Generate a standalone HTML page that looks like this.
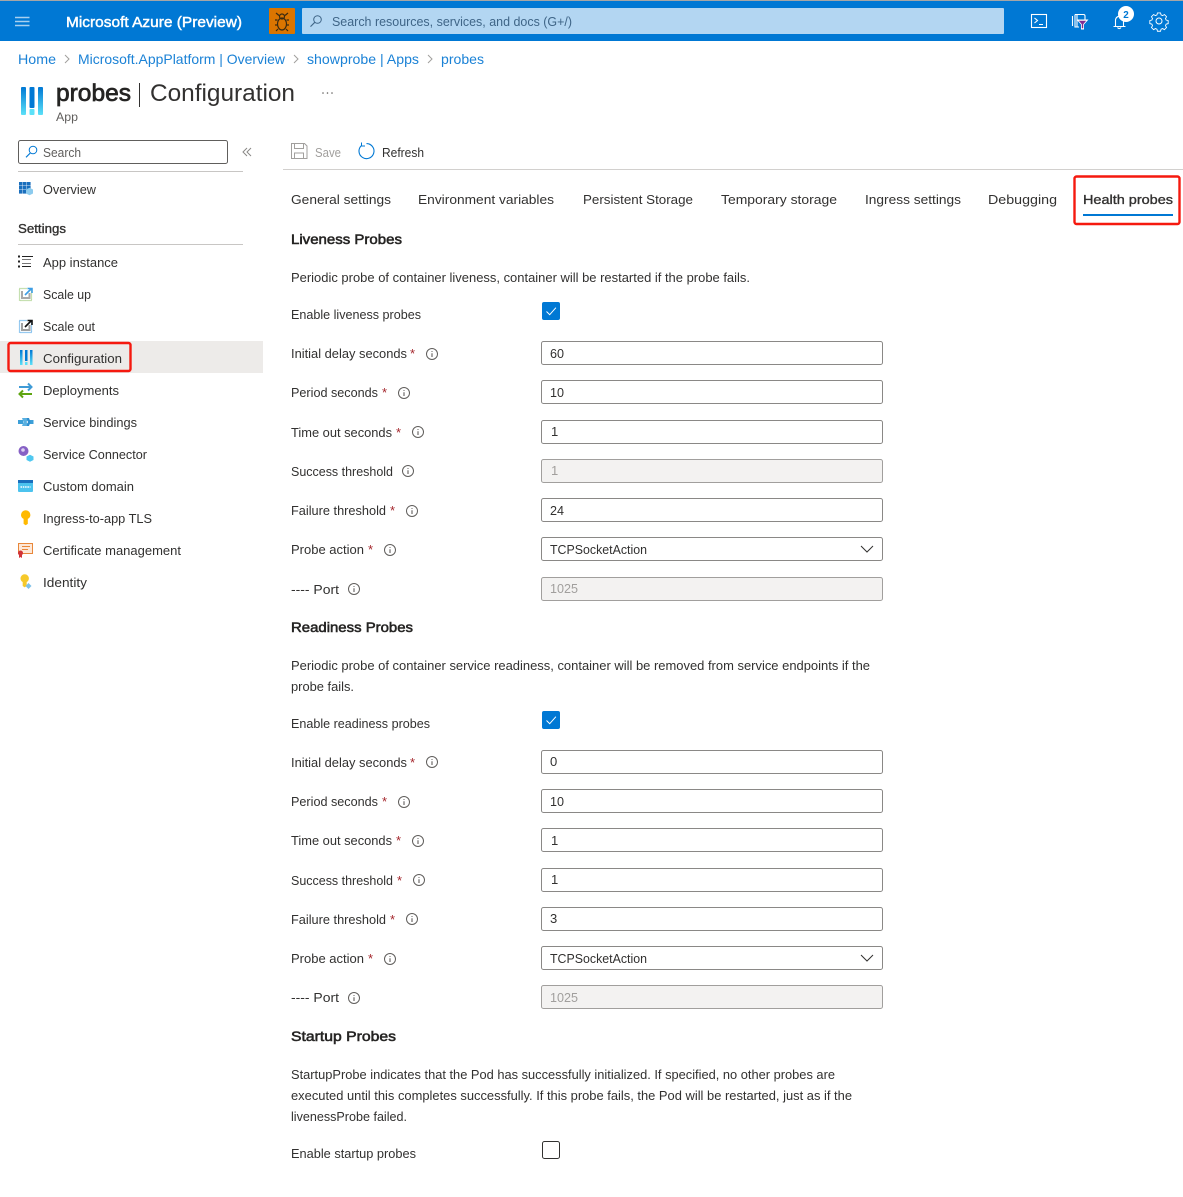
<!DOCTYPE html>
<html lang="en">
<head>
<meta charset="utf-8">
<title>probes | Configuration</title>
<style>
html,body{margin:0;padding:0;background:#fff;width:1183px;height:1197px;overflow:hidden}
svg{display:block}
text{font-family:"Liberation Sans",sans-serif;font-size:13px;fill:#323130}
.sb{stroke:#323130;stroke-width:.35}
.b{font-size:14px;stroke:#252423;stroke-width:.55;fill:#252423}
.l{fill:#1b82d6;font-size:14px}
.r{fill:#a4262c;font-size:13px}
.d{fill:#a19f9d}
.ib{fill:#fff;stroke:#8a8886;stroke-width:1}
.id{fill:#f3f2f1;stroke:#a19f9d;stroke-width:1}
.i{fill:none;stroke:#605e5c;stroke-width:1}
.w{fill:none;stroke:#fff;stroke-width:1.1}
</style>
</head>
<body>
<svg width="1183" height="1197" viewBox="0 0 1183 1197" xmlns="http://www.w3.org/2000/svg">
<defs>
<linearGradient id="g" x1="0" y1="0" x2="0" y2="1"><stop offset="0" stop-color="#0078d4"/><stop offset="1" stop-color="#5ce1f8"/></linearGradient>
<g id="info"><circle cx="0" cy="0" r="5.5" class="i"/><path d="M0-.8V3M0-3V-2.1" stroke="#605e5c" stroke-width="1.1" fill="none"/></g>
<path id="chk" d="M4.500 9.500l3.200 3.200 6.200-7" fill="none" stroke="#fff" stroke-width="1"/>
</defs>

<!-- Top bar -->
<rect width="1183" height="41" fill="#0078d4"/>
<rect width="1183" height="1" fill="#a6a6a6"/>
<path d="M15 17.500h14.500M15 21.500h14.500M15 25.500h14.500" stroke="#a8d0ef" stroke-width="1.500" fill="none"/>
<text x="66" y="27" textLength="176" lengthAdjust="spacingAndGlyphs" style="font-size:15px;fill:#fff;stroke:#fff;stroke-width:.45">Microsoft Azure (Preview)</text>
<rect x="269" y="8" width="26" height="26" rx="1" fill="#db7500"/>
<g fill="none" stroke="#3b2a10" stroke-width="1.200"><ellipse cx="282" cy="24" rx="4.500" ry="6"/><circle cx="282" cy="16.500" r="2.500"/><path d="M276 13l3 2.500M288 13l-3 2.500M275 20h2.500M289 20h-2.500M275 25h2.500M289 25h-2.500M276 31l2-2M288 31l-2-2"/></g>
<rect x="302" y="8" width="702" height="26" rx="1" fill="#b3d6f2"/>
<circle cx="317.500" cy="19.500" r="3.800" fill="none" stroke="#3f6587" stroke-width="1"/><path d="M314.800 22.300l-4.300 4.300" stroke="#3f6587" stroke-width="1.100"/>
<text x="332" y="26" textLength="240" lengthAdjust="spacingAndGlyphs" style="fill:#3f6587">Search resources, services, and docs (G+/)</text>
<!-- right icons -->
<rect x="1031.500" y="14.500" width="15" height="13" class="w"/><path d="M1034.500 18l3 2.500-3 2.500M1039 24.500h4" class="w"/>
<path d="M1075 14.500h8.500a1.500 1.500 0 0 1 1.500 1.500V20M1075 14.500v12.500h4M1072.500 16v10M1077 14.500v12.500" class="w"/>
<path d="M1076.500 19.500h12l-4.500 5v5h-3v-5z" fill="#fff"/><path d="M1078.800 20.700h7.400l-3 3.500v4h-1.400v-4z" fill="#7c2b92"/>
<path d="M1115.500 26.500v-6a4.500 4.500 0 0 1 3-4.200M1123.500 20v6.500M1113.500 26.500h12M1117.500 27.500a2 2 0 0 0 3.500 0" class="w"/>
<circle cx="1126" cy="14" r="8" fill="#fff"/><text x="1123.300" y="18" textLength="5.500" lengthAdjust="spacingAndGlyphs" style="font-size:10px;fill:#0078d4;font-weight:bold">2</text>
<g class="w" style="stroke-width:1"><circle cx="1159" cy="21" r="3"/><path d="M1157.300 13h3.400l.6 2.300 1.700.7 2-1.200 2.400 2.400-1.200 2 .7 1.700 2.300.6v3.400l-2.300.6-.7 1.700 1.200 2-2.400 2.400-2-1.200-1.700.7-.6 2.300h-3.400l-.6-2.300-1.700-.7-2 1.200-2.400-2.400 1.200-2-.7-1.700-2.300-.6v-3.400l2.300-.6.7-1.700-1.200-2 2.400-2.400 2 1.200 1.700-.7z" transform="translate(1159 21) scale(.9) translate(-1159 -22)"/></g>

<!-- Breadcrumb -->
<text x="18" y="64" textLength="38" lengthAdjust="spacingAndGlyphs" class="l">Home</text>
<path d="M65 55l4 4-4 4M294 55l4 4-4 4M428 55l4 4-4 4" fill="none" stroke="#a19f9d"/>
<text x="78" y="64" textLength="207" lengthAdjust="spacingAndGlyphs" class="l">Microsoft.AppPlatform | Overview</text>
<text x="307" y="64" textLength="112" lengthAdjust="spacingAndGlyphs" class="l">showprobe | Apps</text>
<text x="441" y="64" textLength="43" lengthAdjust="spacingAndGlyphs" class="l">probes</text>

<!-- Title -->
<rect x="21" y="87" width="5" height="28" rx="1" fill="url(#g)"/>
<rect x="29.500" y="87" width="5" height="21" rx="1" fill="#0078d4"/><rect x="29.500" y="109" width="5" height="6" rx="1" fill="#5ce1f8"/>
<rect x="38" y="87" width="5" height="28" rx="1" fill="url(#g)"/>
<text x="56" y="101" textLength="75" lengthAdjust="spacingAndGlyphs" style="font-size:24px;fill:#252423;stroke:#252423;stroke-width:.7">probes</text>
<rect x="139" y="83" width="1" height="24" fill="#323130"/>
<text x="150" y="101" textLength="145" lengthAdjust="spacingAndGlyphs" style="font-size:24px;fill:#323130">Configuration</text>
<text x="56" y="121" textLength="22" lengthAdjust="spacingAndGlyphs" style="font-size:12px;fill:#605e5c">App</text>
<circle cx="323" cy="93" r=".8" fill="#605e5c"/><circle cx="327.500" cy="93" r=".8" fill="#605e5c"/><circle cx="332" cy="93" r=".8" fill="#605e5c"/>

<!-- Sidebar -->
<rect x="18.500" y="140.500" width="209" height="23" rx="2" class="ib" style="stroke:#605e5c"/>
<circle cx="33" cy="150" r="3.800" fill="none" stroke="#0078d4"/><path d="M30.300 153l-4.300 4.300" stroke="#0078d4" stroke-width="1.100"/>
<text x="43" y="157" textLength="38" lengthAdjust="spacingAndGlyphs" style="fill:#605e5c">Search</text>
<path d="M247 148l-4 4 4 4M251 148l-4 4 4 4" fill="none" stroke="#8a8886"/>
<rect x="18" y="171" width="225" height="1" fill="#c8c6c4"/>
<!-- Overview icon -->
<g fill="#1a6fbd"><rect x="19" y="182" width="3.600" height="3.600"/><rect x="23" y="182" width="3.600" height="3.600"/><rect x="27" y="182" width="3.600" height="3.600"/><rect x="19" y="186" width="3.600" height="3.600"/><rect x="23" y="186" width="3.600" height="3.600"/><rect x="27" y="186" width="3.600" height="3.600"/><rect x="19" y="190" width="3.600" height="3.600"/><rect x="23" y="190" width="3.600" height="3.600"/></g>
<path d="M26 189.500l3.500-1.800 3.500 1.800v4l-3.500 1.800-3.500-1.800z" fill="#8ccbee"/>
<text x="43" y="194" textLength="53" lengthAdjust="spacingAndGlyphs">Overview</text>
<text x="18" y="233" textLength="48" lengthAdjust="spacingAndGlyphs" class="sb">Settings</text>
<rect x="18" y="244" width="225" height="1" fill="#c8c6c4"/>

<!-- App instance icon -->
<path d="M18 256.500h2M18 261.500h2M18 266.500h2" stroke="#222" stroke-width="2"/><path d="M22 256.500h11" stroke="#222"/><path d="M22 259.500h9M22 263.500h9" stroke="#777"/><path d="M22 266.500h9" stroke="#222"/>
<text x="43" y="267" textLength="75" lengthAdjust="spacingAndGlyphs">App instance</text>
<!-- Scale up -->
<rect x="19.500" y="288.500" width="12" height="12" fill="none" stroke="#8cc063" stroke-width="1.200" stroke-dasharray="1 1"/><path d="M22 291v7h7.500v-5" fill="none" stroke="#a8a8a8" stroke-width="2"/><path d="M25 295l6-6M27.500 288.500h4.500v4.500" fill="none" stroke="#3e9ee5" stroke-width="1.600"/>
<text x="43" y="299" textLength="48" lengthAdjust="spacingAndGlyphs">Scale up</text>
<!-- Scale out -->
<rect x="19.500" y="320.500" width="12" height="12" fill="none" stroke="#2f95e0" stroke-width="1.200" stroke-dasharray="1 1"/><path d="M22 323v7h7.500v-5" fill="none" stroke="#a0a0a0" stroke-width="2"/><path d="M25 327l6-6M27.500 320.500h4.500v4.500" fill="none" stroke="#111" stroke-width="1.600"/>
<text x="43" y="331" textLength="52" lengthAdjust="spacingAndGlyphs">Scale out</text>
<!-- Configuration -->
<rect x="0" y="341" width="263" height="32" fill="#edebe9"/>
<rect x="8.500" y="343" width="122" height="28" rx="2" fill="none" stroke="#f5190f" stroke-width="2.400"/>
<rect x="20" y="350" width="2.500" height="15" fill="url(#g)"/><rect x="25" y="350" width="2.500" height="11" fill="#0078d4"/><rect x="25" y="362" width="2.500" height="3" fill="#5ce1f8"/><rect x="30" y="350" width="2.500" height="15" fill="url(#g)"/>
<text x="43" y="363" textLength="79" lengthAdjust="spacingAndGlyphs">Configuration</text>
<!-- Deployments -->
<path d="M19 387h12M28 383.500l3.500 3.500-3.500 3.500" fill="none" stroke="#3f9bd6" stroke-width="2"/>
<path d="M32 394H20M23 390.500l-3.500 3.500 3.500 3.500" fill="none" stroke="#5ea512" stroke-width="2"/>
<text x="43" y="395" textLength="76" lengthAdjust="spacingAndGlyphs">Deployments</text>
<!-- Service bindings -->
<path d="M18 420h5v4h-5zM28 420h5.500v4H28z" fill="#3c9fd8"/><path d="M22 418h4.500l1.500 2-1.500 2 1.500 2-1.500 2H22l1.500-4z" fill="#5ab0e0"/><path d="M26.500 418H29l1.500 4-1.500 4h-2.500l1.500-4z" fill="#2f8fd0"/>
<text x="43" y="427" textLength="94" lengthAdjust="spacingAndGlyphs">Service bindings</text>
<!-- Service Connector -->
<circle cx="23.500" cy="451" r="5" fill="#8661c5"/><circle cx="23" cy="450" r="1.800" fill="#dcd0f2"/>
<path d="M26.500 456.500l3.500-1.800 3.500 1.800v3.500l-3.500 1.800-3.500-1.800z" fill="#50c8f0"/>
<text x="43" y="459" textLength="104" lengthAdjust="spacingAndGlyphs">Service Connector</text>
<!-- Custom domain -->
<rect x="18" y="480" width="15" height="12" rx="1" fill="#4cc3ee"/><rect x="18" y="480" width="15" height="3" fill="#1a6fbd"/><path d="M20.500 487h10" stroke="#fff" stroke-dasharray="1.500 .8" stroke-width="1.600"/>
<text x="43" y="491" textLength="91" lengthAdjust="spacingAndGlyphs">Custom domain</text>
<!-- Ingress TLS key -->
<path d="M21 515a4.700 4.700 0 0 1 9.400 0c0 1.900-1.100 3.200-2.600 3.900v5l-2.100 1.400-2.100-1.400v-5c-1.500-.7-2.600-2-2.600-3.900z" fill="#ffb900"/>
<text x="43" y="523" textLength="109" lengthAdjust="spacingAndGlyphs">Ingress-to-app TLS</text>
<!-- Certificate -->
<rect x="18.500" y="543.500" width="14" height="10" fill="#fde8d8" stroke="#e8873a"/><path d="M22 546.500h8M22 549.500h6" stroke="#e8873a"/><circle cx="20.500" cy="553" r="2.500" fill="#d13438"/><path d="M19 555h3v3l-1.500-1-1.500 1z" fill="#d13438"/>
<text x="43" y="555" textLength="138" lengthAdjust="spacingAndGlyphs">Certificate management</text>
<!-- Identity -->
<path d="M20.500 578.500a4.200 4.200 0 0 1 8.400 0c0 1.700-1 2.900-2.200 3.500v4l-2 1.400-2-1.400v-4c-1.200-.6-2.200-1.800-2.200-3.500z" fill="#f6c92a"/><path d="M28.500 583l3 3-3 3-3-3z" fill="#7fc1e8"/>
<text x="43" y="587" textLength="44" lengthAdjust="spacingAndGlyphs">Identity</text>

<!-- Toolbar -->
<path d="M291.500 143.500h13l2.500 2.500v12.500h-15.500z" fill="none" stroke="#a19f9d"/><path d="M294.500 143.500v5h9v-5M294.500 158.500v-5.500h9v5.500" fill="none" stroke="#a19f9d"/>
<text x="315" y="157" textLength="26" lengthAdjust="spacingAndGlyphs" class="d">Save</text>
<path d="M361.500 145.500a7.500 7.500 0 1 0 5-1.900" fill="none" stroke="#0078d4" stroke-width="1.100"/><path d="M361.500 142.500v3.500h3.500" fill="none" stroke="#0078d4"/>
<text x="382" y="157" textLength="42" lengthAdjust="spacingAndGlyphs">Refresh</text>
<rect x="283" y="169" width="900" height="1" fill="#d2d0ce"/>

<!-- Tabs -->
<text x="291" y="204" textLength="100" lengthAdjust="spacingAndGlyphs">General settings</text>
<text x="418" y="204" textLength="136" lengthAdjust="spacingAndGlyphs">Environment variables</text>
<text x="583" y="204" textLength="110" lengthAdjust="spacingAndGlyphs">Persistent Storage</text>
<text x="721" y="204" textLength="116" lengthAdjust="spacingAndGlyphs">Temporary storage</text>
<text x="865" y="204" textLength="96" lengthAdjust="spacingAndGlyphs">Ingress settings</text>
<text x="988" y="204" textLength="69" lengthAdjust="spacingAndGlyphs">Debugging</text>
<text x="1083" y="204" textLength="90" lengthAdjust="spacingAndGlyphs" class="sb">Health probes</text>
<rect x="1083" y="214" width="90" height="2" fill="#0078d4"/>
<rect x="1074.500" y="176.500" width="105" height="47.500" rx="2" fill="none" stroke="#f5190f" stroke-width="2.400"/>

<!-- Liveness -->
<text x="291" y="244" textLength="111" lengthAdjust="spacingAndGlyphs" class="b">Liveness Probes</text>
<text x="291" y="282" textLength="459" lengthAdjust="spacingAndGlyphs">Periodic probe of container liveness, container will be restarted if the probe fails.</text>
<text x="291" y="319" textLength="130" lengthAdjust="spacingAndGlyphs">Enable liveness probes</text>
<rect x="542" y="302" width="18" height="18" rx="2" fill="#0078d4"/><use href="#chk" x="542" y="302"/>

<text x="291" y="358" textLength="116" lengthAdjust="spacingAndGlyphs">Initial delay seconds</text><text x="410" y="358" class="r">*</text><use href="#info" x="432" y="354"/>
<rect x="541.500" y="341.500" width="341" height="23" rx="2" class="ib"/><text x="550" y="358" textLength="14" lengthAdjust="spacingAndGlyphs">60</text>

<text x="291" y="397" textLength="87" lengthAdjust="spacingAndGlyphs">Period seconds</text><text x="382" y="397" class="r">*</text><use href="#info" x="404" y="393"/>
<rect x="541.500" y="380.500" width="341" height="23" rx="2" class="ib"/><text x="550" y="397" textLength="14" lengthAdjust="spacingAndGlyphs">10</text>

<text x="291" y="437" textLength="101" lengthAdjust="spacingAndGlyphs">Time out seconds</text><text x="396" y="437" class="r">*</text><use href="#info" x="418" y="432"/>
<rect x="541.500" y="420.500" width="341" height="23" rx="2" class="ib"/><text x="551" y="436">1</text>

<text x="291" y="476" textLength="102" lengthAdjust="spacingAndGlyphs">Success threshold</text><use href="#info" x="408" y="471"/>
<rect x="541.500" y="459.500" width="341" height="23" rx="2" class="id"/><text x="551" y="475" class="d">1</text>

<text x="291" y="515" textLength="95" lengthAdjust="spacingAndGlyphs">Failure threshold</text><text x="390" y="515" class="r">*</text><use href="#info" x="412" y="511"/>
<rect x="541.500" y="498.500" width="341" height="23" rx="2" class="ib"/><text x="550" y="515" textLength="14" lengthAdjust="spacingAndGlyphs">24</text>

<text x="291" y="554" textLength="73" lengthAdjust="spacingAndGlyphs">Probe action</text><text x="368" y="554" class="r">*</text><use href="#info" x="390" y="550"/>
<rect x="541.500" y="537.500" width="341" height="23" rx="2" class="ib"/><text x="550" y="554" textLength="97" lengthAdjust="spacingAndGlyphs">TCPSocketAction</text><path d="M861 546l6 6 6-6" fill="none" stroke="#323130"/>

<text x="291" y="594" textLength="48" lengthAdjust="spacingAndGlyphs">---- Port</text><use href="#info" x="354" y="589"/>
<rect x="541.500" y="577.500" width="341" height="23" rx="2" class="id"/><text x="550" y="593" textLength="28" lengthAdjust="spacingAndGlyphs" class="d">1025</text>

<!-- Readiness -->
<text x="291" y="632" textLength="122" lengthAdjust="spacingAndGlyphs" class="b">Readiness Probes</text>
<text x="291" y="670" textLength="579" lengthAdjust="spacingAndGlyphs">Periodic probe of container service readiness, container will be removed from service endpoints if the</text>
<text x="291" y="691" textLength="63" lengthAdjust="spacingAndGlyphs">probe fails.</text>
<text x="291" y="728" textLength="139" lengthAdjust="spacingAndGlyphs">Enable readiness probes</text>
<rect x="542" y="711" width="18" height="18" rx="2" fill="#0078d4"/><use href="#chk" x="542" y="711"/>

<text x="291" y="767" textLength="116" lengthAdjust="spacingAndGlyphs">Initial delay seconds</text><text x="410" y="767" class="r">*</text><use href="#info" x="432" y="762"/>
<rect x="541.500" y="750.500" width="341" height="23" rx="2" class="ib"/><text x="550" y="766">0</text>

<text x="291" y="806" textLength="87" lengthAdjust="spacingAndGlyphs">Period seconds</text><text x="382" y="806" class="r">*</text><use href="#info" x="404" y="802"/>
<rect x="541.500" y="789.500" width="341" height="23" rx="2" class="ib"/><text x="550" y="806" textLength="14" lengthAdjust="spacingAndGlyphs">10</text>

<text x="291" y="845" textLength="101" lengthAdjust="spacingAndGlyphs">Time out seconds</text><text x="396" y="845" class="r">*</text><use href="#info" x="418" y="841"/>
<rect x="541.500" y="828.500" width="341" height="23" rx="2" class="ib"/><text x="551" y="845">1</text>

<text x="291" y="885" textLength="102" lengthAdjust="spacingAndGlyphs">Success threshold</text><text x="397" y="885" class="r">*</text><use href="#info" x="419" y="880"/>
<rect x="541.500" y="868.500" width="341" height="23" rx="2" class="ib"/><text x="551" y="884">1</text>

<text x="291" y="924" textLength="95" lengthAdjust="spacingAndGlyphs">Failure threshold</text><text x="390" y="924" class="r">*</text><use href="#info" x="412" y="919"/>
<rect x="541.500" y="907.500" width="341" height="23" rx="2" class="ib"/><text x="550" y="923">3</text>

<text x="291" y="963" textLength="73" lengthAdjust="spacingAndGlyphs">Probe action</text><text x="368" y="963" class="r">*</text><use href="#info" x="390" y="959"/>
<rect x="541.500" y="946.500" width="341" height="23" rx="2" class="ib"/><text x="550" y="963" textLength="97" lengthAdjust="spacingAndGlyphs">TCPSocketAction</text><path d="M861 955l6 6 6-6" fill="none" stroke="#323130"/>

<text x="291" y="1002" textLength="48" lengthAdjust="spacingAndGlyphs">---- Port</text><use href="#info" x="354" y="998"/>
<rect x="541.500" y="985.500" width="341" height="23" rx="2" class="id"/><text x="550" y="1002" textLength="28" lengthAdjust="spacingAndGlyphs" class="d">1025</text>

<!-- Startup -->
<text x="291" y="1041" textLength="105" lengthAdjust="spacingAndGlyphs" class="b">Startup Probes</text>
<text x="291" y="1079" textLength="544" lengthAdjust="spacingAndGlyphs">StartupProbe indicates that the Pod has successfully initialized. If specified, no other probes are</text>
<text x="291" y="1100" textLength="561" lengthAdjust="spacingAndGlyphs">executed until this completes successfully. If this probe fails, the Pod will be restarted, just as if the</text>
<text x="291" y="1121" textLength="116" lengthAdjust="spacingAndGlyphs">livenessProbe failed.</text>
<text x="291" y="1158" textLength="125" lengthAdjust="spacingAndGlyphs">Enable startup probes</text>
<rect x="542.500" y="1141.500" width="17" height="17" rx="2" fill="#fff" stroke="#323130"/>
</svg>
</body>
</html>
